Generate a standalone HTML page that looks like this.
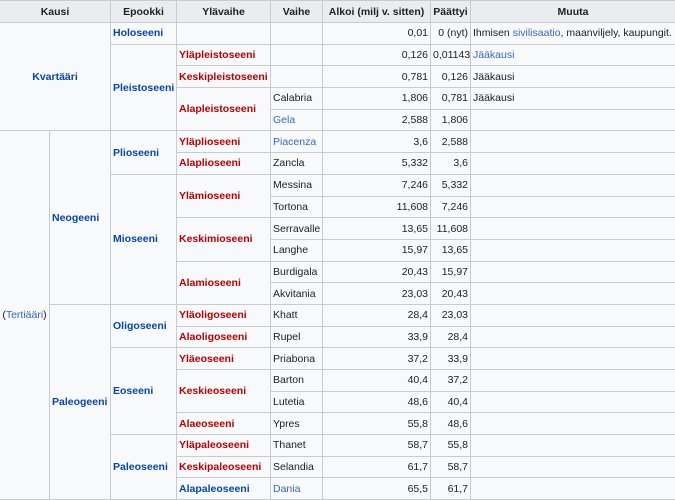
<!DOCTYPE html>
<html><head><meta charset="utf-8"><style>
html,body{margin:0;padding:0;width:675px;height:500px;overflow:hidden;background:#fff}
table{border-collapse:collapse;table-layout:fixed;font-family:"Liberation Sans",Arial,sans-serif;font-size:10.5px;color:#202122;background:#f8f9fa;width:676px;margin-left:-1px}
td,th{border:1px solid #c8ccd1;padding:0 2px;height:20.7px;vertical-align:middle;white-space:nowrap;overflow:hidden}
th{background:#eaecf0;text-align:center;height:21px;font-weight:bold}
.b{color:#0645ad;font-weight:bold}
.r{color:#ba0000;font-weight:bold}
.l{color:#3366cc}
.n{text-align:right}
.c{text-align:center}
</style></head><body>
<table>
<colgroup><col style="width:50px"><col style="width:61px"><col style="width:66px"><col style="width:94px"><col style="width:52px"><col style="width:108px"><col style="width:40px"><col style="width:205px"></colgroup>
<tr><th colspan="2">Kausi</th><th>Epookki</th><th>Ylävaihe</th><th>Vaihe</th><th>Alkoi (milj v. sitten)</th><th>Päättyi</th><th>Muuta</th></tr>
<tr><td colspan="2" rowspan="5" class="b c">Kvartääri</td><td class="b">Holoseeni</td><td></td><td></td><td class="n">0,01</td><td class="n">0 (nyt)</td><td>Ihmisen <span class="l">sivilisaatio</span>, maanviljely, kaupungit.</td></tr>
<tr><td rowspan="4" class="b">Pleistoseeni</td><td class="r">Yläpleistoseeni</td><td></td><td class="n">0,126</td><td class="n">0,01143</td><td class="l">Jääkausi</td></tr>
<tr><td class="r">Keskipleistoseeni</td><td></td><td class="n">0,781</td><td class="n">0,126</td><td>Jääkausi</td></tr>
<tr><td rowspan="2" class="r">Alapleistoseeni</td><td>Calabria</td><td class="n">1,806</td><td class="n">0,781</td><td>Jääkausi</td></tr>
<tr><td class="l">Gela</td><td class="n">2,588</td><td class="n">1,806</td><td></td></tr>
<tr><td rowspan="17" class="c">(<span class="l">Tertiääri</span>)</td><td rowspan="8" class="b">Neogeeni</td><td rowspan="2" class="b">Plioseeni</td><td class="r">Yläplioseeni</td><td class="l">Piacenza</td><td class="n">3,6</td><td class="n">2,588</td><td></td></tr>
<tr><td class="r">Alaplioseeni</td><td>Zancla</td><td class="n">5,332</td><td class="n">3,6</td><td></td></tr>
<tr><td rowspan="6" class="b">Mioseeni</td><td rowspan="2" class="r">Ylämioseeni</td><td>Messina</td><td class="n">7,246</td><td class="n">5,332</td><td></td></tr>
<tr><td>Tortona</td><td class="n">11,608</td><td class="n">7,246</td><td></td></tr>
<tr><td rowspan="2" class="r">Keskimioseeni</td><td>Serravalle</td><td class="n">13,65</td><td class="n">11,608</td><td></td></tr>
<tr><td>Langhe</td><td class="n">15,97</td><td class="n">13,65</td><td></td></tr>
<tr><td rowspan="2" class="r">Alamioseeni</td><td>Burdigala</td><td class="n">20,43</td><td class="n">15,97</td><td></td></tr>
<tr><td>Akvitania</td><td class="n">23,03</td><td class="n">20,43</td><td></td></tr>
<tr><td rowspan="9" class="b">Paleogeeni</td><td rowspan="2" class="b">Oligoseeni</td><td class="r">Yläoligoseeni</td><td>Khatt</td><td class="n">28,4</td><td class="n">23,03</td><td></td></tr>
<tr><td class="r">Alaoligoseeni</td><td>Rupel</td><td class="n">33,9</td><td class="n">28,4</td><td></td></tr>
<tr><td rowspan="4" class="b">Eoseeni</td><td class="r">Yläeoseeni</td><td>Priabona</td><td class="n">37,2</td><td class="n">33,9</td><td></td></tr>
<tr><td rowspan="2" class="r">Keskieoseeni</td><td>Barton</td><td class="n">40,4</td><td class="n">37,2</td><td></td></tr>
<tr><td>Lutetia</td><td class="n">48,6</td><td class="n">40,4</td><td></td></tr>
<tr><td class="r">Alaeoseeni</td><td>Ypres</td><td class="n">55,8</td><td class="n">48,6</td><td></td></tr>
<tr><td rowspan="3" class="b">Paleoseeni</td><td class="r">Yläpaleoseeni</td><td>Thanet</td><td class="n">58,7</td><td class="n">55,8</td><td></td></tr>
<tr><td class="r">Keskipaleoseeni</td><td>Selandia</td><td class="n">61,7</td><td class="n">58,7</td><td></td></tr>
<tr><td class="b">Alapaleoseeni</td><td class="l">Dania</td><td class="n">65,5</td><td class="n">61,7</td><td></td></tr>
</table>
</body></html>
